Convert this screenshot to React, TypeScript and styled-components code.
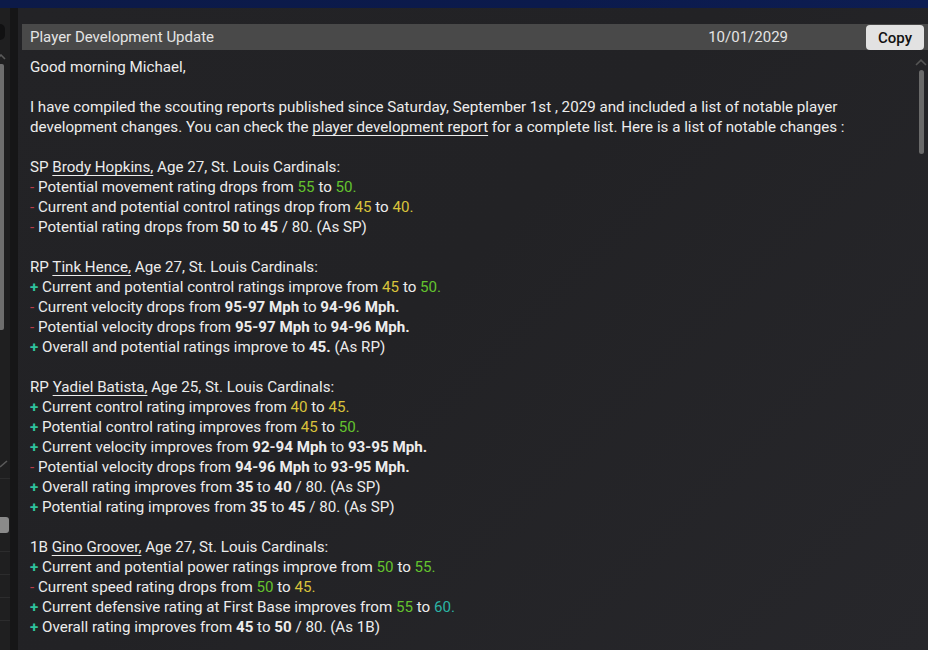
import React from 'react'
import styled, { createGlobalStyle } from 'styled-components'

type Tone = 'green' | 'yellow' | 'teal'

interface IPart {
  t: string
  b?: boolean
  c?: Tone
}

interface ILine {
  sign: '+' | '-'
  parts: IPart[]
}

interface IBlock {
  pos: string
  name: string
  rest: string
  lines: ILine[]
}

const blocks: IBlock[] = [
  {
    pos: 'SP',
    name: 'Brody Hopkins,',
    rest: ' Age 27, St. Louis Cardinals:',
    lines: [
      { sign: '-', parts: [{ t: 'Potential movement rating drops from ' }, { t: '55', c: 'green' }, { t: ' to ' }, { t: '50.', c: 'green' }] },
      { sign: '-', parts: [{ t: 'Current and potential control ratings drop from ' }, { t: '45', c: 'yellow' }, { t: ' to ' }, { t: '40.', c: 'yellow' }] },
      { sign: '-', parts: [{ t: 'Potential rating drops from ' }, { t: '50', b: true }, { t: ' to ' }, { t: '45', b: true }, { t: ' / 80. (As SP)' }] },
    ],
  },
  {
    pos: 'RP',
    name: 'Tink Hence,',
    rest: ' Age 27, St. Louis Cardinals:',
    lines: [
      { sign: '+', parts: [{ t: 'Current and potential control ratings improve from ' }, { t: '45', c: 'yellow' }, { t: ' to ' }, { t: '50.', c: 'green' }] },
      { sign: '-', parts: [{ t: 'Current velocity drops from ' }, { t: '95-97 Mph', b: true }, { t: ' to ' }, { t: '94-96 Mph.', b: true }] },
      { sign: '-', parts: [{ t: 'Potential velocity drops from ' }, { t: '95-97 Mph', b: true }, { t: ' to ' }, { t: '94-96 Mph.', b: true }] },
      { sign: '+', parts: [{ t: 'Overall and potential ratings improve to ' }, { t: '45.', b: true }, { t: ' (As RP)' }] },
    ],
  },
  {
    pos: 'RP',
    name: 'Yadiel Batista,',
    rest: ' Age 25, St. Louis Cardinals:',
    lines: [
      { sign: '+', parts: [{ t: 'Current control rating improves from ' }, { t: '40', c: 'yellow' }, { t: ' to ' }, { t: '45.', c: 'yellow' }] },
      { sign: '+', parts: [{ t: 'Potential control rating improves from ' }, { t: '45', c: 'yellow' }, { t: ' to ' }, { t: '50.', c: 'green' }] },
      { sign: '+', parts: [{ t: 'Current velocity improves from ' }, { t: '92-94 Mph', b: true }, { t: ' to ' }, { t: '93-95 Mph.', b: true }] },
      { sign: '-', parts: [{ t: 'Potential velocity drops from ' }, { t: '94-96 Mph', b: true }, { t: ' to ' }, { t: '93-95 Mph.', b: true }] },
      { sign: '+', parts: [{ t: 'Overall rating improves from ' }, { t: '35', b: true }, { t: ' to ' }, { t: '40', b: true }, { t: ' / 80. (As SP)' }] },
      { sign: '+', parts: [{ t: 'Potential rating improves from ' }, { t: '35', b: true }, { t: ' to ' }, { t: '45', b: true }, { t: ' / 80. (As SP)' }] },
    ],
  },
  {
    pos: '1B',
    name: 'Gino Groover,',
    rest: ' Age 27, St. Louis Cardinals:',
    lines: [
      { sign: '+', parts: [{ t: 'Current and potential power ratings improve from ' }, { t: '50', c: 'green' }, { t: ' to ' }, { t: '55.', c: 'green' }] },
      { sign: '-', parts: [{ t: 'Current speed rating drops from ' }, { t: '50', c: 'green' }, { t: ' to ' }, { t: '45.', c: 'yellow' }] },
      { sign: '+', parts: [{ t: 'Current defensive rating at First Base improves from ' }, { t: '55', c: 'green' }, { t: ' to ' }, { t: '60.', c: 'teal' }] },
      { sign: '+', parts: [{ t: 'Overall rating improves from ' }, { t: '45', b: true }, { t: ' to ' }, { t: '50', b: true }, { t: ' / 80. (As 1B)' }] },
    ],
  },
]

const toneColor: Record<Tone, string> = {
  green: '#63c22e',
  yellow: '#d9c23b',
  teal: '#2bb3a4',
}

export default function App() {
  return (
    <>
      <GlobalStyle />
      <StyledPage>
        <StyledTopBar />
        <StyledBody>
          <StyledSidebar>
            <StyledKnob />
            <StyledChevron>
              <svg width="10" height="6" viewBox="0 0 10 6">
                <path d="M1 5 L5 1 L9 5" stroke="#5a5a5a" strokeWidth="1.6" fill="none" />
              </svg>
            </StyledChevron>
            <StyledSideThumb />
            <StyledSideCheck>
              <svg width="10" height="8" viewBox="0 0 10 8">
                <path d="M1 7 L8 1" stroke="#5a5a5a" strokeWidth="1.6" fill="none" />
              </svg>
            </StyledSideCheck>
            <StyledSideRule $gap={10} />
            <StyledSideButton />
            <StyledSideRule $gap={18} />
            <StyledSideRule $gap={22} />
            <StyledSideRule $gap={22} />
            <StyledSideRule $gap={22} />
          </StyledSidebar>
          <StyledDivider />
          <StyledMain>
            <StyledHeader>
              <StyledTitle>Player Development Update</StyledTitle>
              <StyledDate>10/01/2029</StyledDate>
              <StyledCopy>Copy</StyledCopy>
            </StyledHeader>
            <StyledContentRow>
              <StyledText>
                <StyledLine>Good morning Michael,</StyledLine>
                <StyledGap />
                <StyledLine>
                  I have compiled the scouting reports published since Saturday, September 1st , 2029 and included a list of notable player
                  <br />
                  development changes. You can check the <StyledLink>player development report</StyledLink> for a complete list. Here is a
                  list of notable changes :
                </StyledLine>
                {blocks.map((block) => (
                  <StyledBlock key={block.name}>
                    <StyledLine>
                      {block.pos} <StyledLink>{block.name}</StyledLink>
                      {block.rest}
                    </StyledLine>
                    {block.lines.map((line, i) => (
                      <StyledLine key={i}>
                        <StyledSign $plus={line.sign === '+'}>{line.sign} </StyledSign>
                        {line.parts.map((p, j) => (
                          <StyledValue key={j} $bold={p.b} $tone={p.c}>
                            {p.t}
                          </StyledValue>
                        ))}
                      </StyledLine>
                    ))}
                  </StyledBlock>
                ))}
              </StyledText>
              <StyledScroll>
                <svg width="12" height="7" viewBox="0 0 12 7">
                  <path d="M1 6 L6 1.2 L11 6" stroke="#555" strokeWidth="1.6" fill="none" />
                </svg>
                <StyledThumb />
              </StyledScroll>
            </StyledContentRow>
          </StyledMain>
        </StyledBody>
      </StyledPage>
    </>
  )
}

const GlobalStyle = createGlobalStyle`
  html, body {
    margin: 0;
    padding: 0;
    background: #1b1b1c;
  }

  body {
    font-family: Roboto, "Liberation Sans", sans-serif;
  }
`

const StyledPage = styled.div`
  display: flex;
  flex-direction: column;
  height: 650px;
  overflow: hidden;
`

const StyledTopBar = styled.div`
  background: linear-gradient(90deg, #0c1a48, #0b1a4c 60%, #0d1d52);
  flex: 0 0 8px;
`

const StyledBody = styled.div`
  display: flex;
  flex: 1;
  min-height: 0;
`

const StyledSidebar = styled.div`
  align-items: flex-start;
  background: #1f1f20;
  display: flex;
  flex: 0 0 10px;
  flex-direction: column;
  overflow: hidden;
  padding-top: 16px;
`

const StyledKnob = styled.div`
  background: #111112;
  border-radius: 0 6px 6px 0;
  height: 16px;
  width: 5px;
`

const StyledChevron = styled.div`
  display: flex;
  margin: 14px 0 0 -4px;
`

const StyledSideThumb = styled.div`
  background: #6e6e6e;
  border-radius: 0 2px 2px 0;
  height: 266px;
  margin-top: 4px;
  width: 4px;
`

const StyledSideCheck = styled.div`
  display: flex;
  margin: 130px 0 0 -1px;
`

const StyledSideRule = styled.div<{ $gap: number }>`
  background: #2c2c2d;
  flex: 0 0 1px;
  margin-top: ${({ $gap }) => $gap}px;
  width: 100%;
`

const StyledSideButton = styled.div`
  background: #8a8a8a;
  border-radius: 0 3px 3px 0;
  height: 16px;
  margin-top: 38px;
  width: 9px;
`

const StyledDivider = styled.div`
  background: #161617;
  flex: 0 0 8px;
`

const StyledMain = styled.div`
  background: linear-gradient(135deg, #232326 0%, #222225 45%, #27272b 100%);
  display: flex;
  flex: 1;
  flex-direction: column;
  min-width: 0;
  padding-top: 16px;
`

const StyledHeader = styled.div`
  align-items: center;
  background: #494949;
  display: flex;
  height: 26px;
  margin-left: 4px;
  padding: 0 4px 0 8px;
`

const StyledTitle = styled.div`
  color: #e4e4e4;
  flex: 1;
  font-size: 15px;
`

const StyledDate = styled.div`
  color: #e4e4e4;
  font-size: 15px;
  margin-right: 78px;
`

const StyledCopy = styled.button`
  background: #e2e2e2;
  border: 0;
  border-radius: 4px;
  color: #111;
  font-family: Roboto, "Liberation Sans", sans-serif;
  font-size: 15px;
  font-weight: 500;
  height: 25px;
  margin-top: 1px;
  padding: 0;
  width: 58px;
`

const StyledContentRow = styled.div`
  display: flex;
  flex: 1;
  min-height: 0;
`

const StyledText = styled.div`
  color: #ececec;
  flex: 1;
  font-size: 15.15px;
  line-height: 20px;
  padding: 7px 0 0 12px;
  white-space: nowrap;
`

const StyledLine = styled.div``

const StyledGap = styled.div`
  height: 20px;
`

const StyledBlock = styled.div`
  margin-top: 20px;
`

const StyledLink = styled.span`
  text-decoration: underline;
  text-underline-offset: 3px;
`

const StyledSign = styled.span<{ $plus: boolean }>`
  color: ${({ $plus }) => ($plus ? '#2ec29d' : '#b83d4a')};
  font-weight: ${({ $plus }) => ($plus ? 700 : 400)};
`

const StyledValue = styled.span<{ $bold?: boolean; $tone?: Tone }>`
  color: ${({ $tone }) => ($tone ? toneColor[$tone] : 'inherit')};
  font-weight: ${({ $bold }) => ($bold ? 700 : 400)};
`

const StyledScroll = styled.div`
  align-items: center;
  display: flex;
  flex: 0 0 14px;
  flex-direction: column;
  padding-top: 9px;
`

const StyledThumb = styled.div`
  background: #6a6a6a;
  border-radius: 3px;
  height: 84px;
  margin-top: 4px;
  width: 5px;
`
